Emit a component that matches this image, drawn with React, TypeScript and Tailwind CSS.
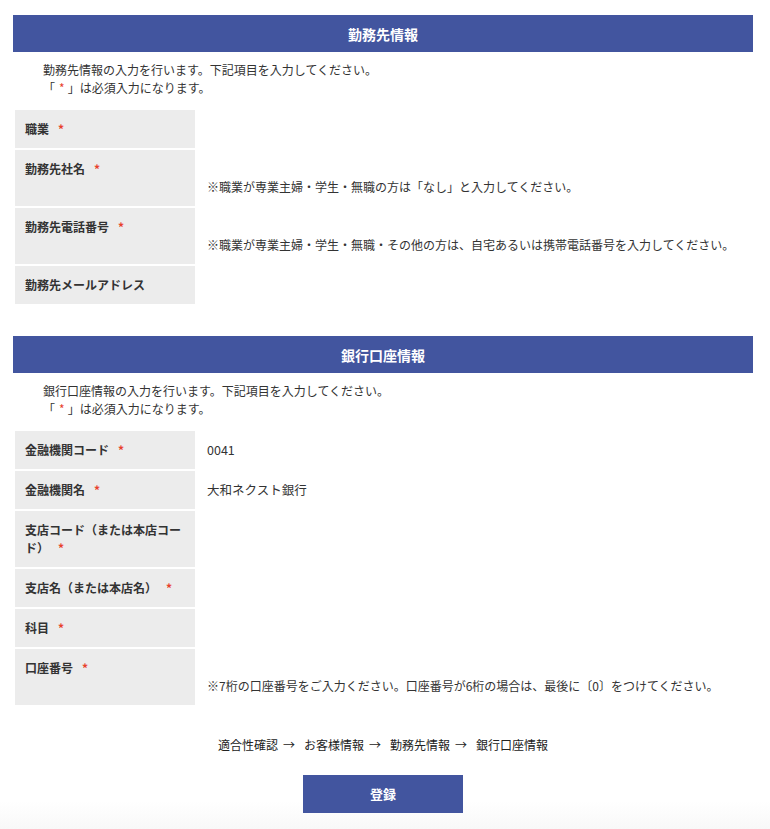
import React from 'react'

type Row = {
  label: string
  required?: boolean
  value?: string
  note?: string
}

const workRows: Row[] = [
  { label: '職業', required: true },
  { label: '勤務先社名', required: true, note: '※職業が専業主婦・学生・無職の方は「なし」と入力してください。' },
  { label: '勤務先電話番号', required: true, note: '※職業が専業主婦・学生・無職・その他の方は、自宅あるいは携帯電話番号を入力してください。' },
  { label: '勤務先メールアドレス' },
]

const bankRows: Row[] = [
  { label: '金融機関コード', required: true, value: '0041' },
  { label: '金融機関名', required: true, value: '大和ネクスト銀行' },
  { label: '支店コード（または本店コード）', required: true },
  { label: '支店名（または本店名）', required: true },
  { label: '科目', required: true },
  { label: '口座番号', required: true, note: '※7桁の口座番号をご入力ください。口座番号が6桁の場合は、最後に〔0〕をつけてください。' },
]

const Req = () => <span className="ml-[9px] text-[#e8412c]">*</span>

function Section({ title, intro, rows }: { title: string; intro: string; rows: Row[] }) {
  return (
    <section>
      <h2 className="h-[37px] bg-[#42559f] flex items-center justify-center text-white font-bold text-[14px]">
        {title}
      </h2>
      <div className="pl-[30px] pt-[9px] pb-[11px]">
        <p>{intro}</p>
        <p>
          「<span className="ml-[4px] mr-[3px] text-[#e8412c]">*</span>」は必須入力になります。
        </p>
      </div>
      <div className="grid grid-cols-[180px_1fr] gap-[2px] p-[2px]">
        {rows.map((row) => (
          <React.Fragment key={row.label}>
            <div className="bg-[#ececec] p-[10px] font-bold">
              {row.label}
              {row.required && <Req />}
            </div>
            <div className="p-[10px]">
              {row.value && <p className="text-[12.5px]">{row.value}</p>}
              {row.note && (
                <>
                  <div className="h-[18px]"></div>
                  <p>{row.note}</p>
                </>
              )}
            </div>
          </React.Fragment>
        ))}
      </div>
    </section>
  )
}

export default function App() {
  const steps = ['適合性確認', 'お客様情報', '勤務先情報', '銀行口座情報']

  return (
    <div className="min-h-screen bg-[linear-gradient(to_bottom,#ffffff_calc(100%-28px),#f8f8f8)] font-['Noto_Sans_CJK_JP',sans-serif] text-[12px] leading-[18px] text-[#333]">
      <div className="pl-[13px] pr-[17px] pt-[15px] pb-[16px]">
        <Section
          title="勤務先情報"
          intro="勤務先情報の入力を行います。下記項目を入力してください。"
          rows={workRows}
        />

        <div className="mt-[30px]">
          <Section
            title="銀行口座情報"
            intro="銀行口座情報の入力を行います。下記項目を入力してください。"
            rows={bankRows}
          />
        </div>

        {/* Steps */}
        <div className="mt-[29px] flex justify-center text-[#222]">
          {steps.map((step, i) => (
            <span key={step}>
              {step}
              {i < steps.length - 1 && <span className="ml-[5px] mr-[9px]">→</span>}
            </span>
          ))}
        </div>

        <div className="mt-[21px] flex justify-center">
          <button className="w-[160px] h-[38px] bg-[#42559f] text-white font-bold text-[13px]">
            登録
          </button>
        </div>
      </div>
    </div>
  )
}
